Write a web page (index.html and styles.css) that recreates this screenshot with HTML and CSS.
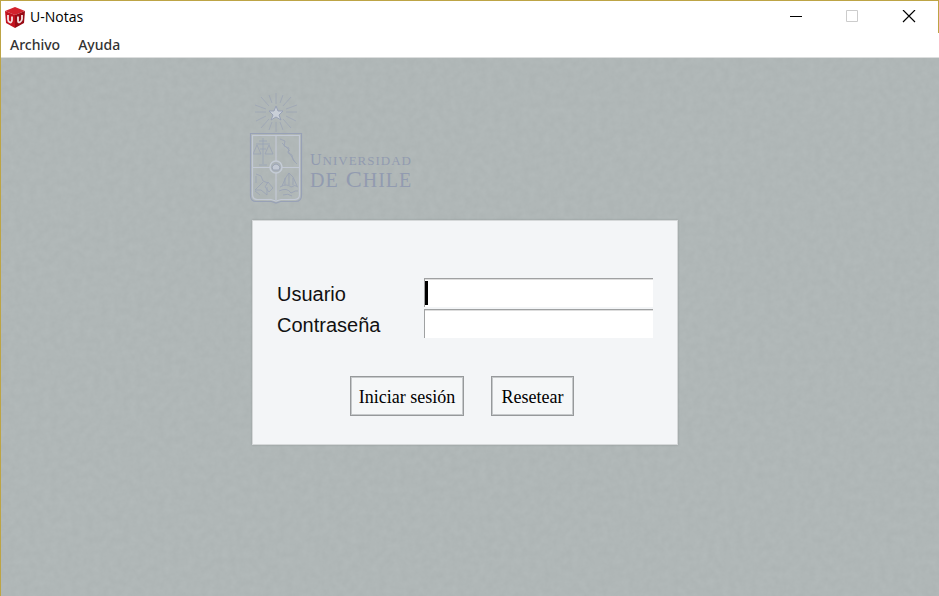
FILE: index.html
```html
<!DOCTYPE html>
<html lang="es">
<head>
<meta charset="utf-8">
<meta name="viewport" content="width=device-width, initial-scale=1">
<title>U-Notas</title>
<link rel="stylesheet" href="styles.css">
</head>
<body>
<div class="window">
  <header class="chrome">
    <div class="titlebar">
      <svg class="app-icon" viewBox="0 0 20 21" aria-hidden="true">
        <path fill="#d3222c" d="M0 4 10 0l10 4-10 4z"/>
        <path fill="#c2121e" d="M0 4l10 4v13L1 16z"/>
        <path fill="#980a14" d="M20 4 10 8v13l9-5z"/>
        <path fill="none" stroke="#f6e4e4" stroke-width="1.800" d="M3 8v4.500q0 2 1.800 2.800T7 13.200V9.500M13 9.500v4.500q0 2 1.900 1.200T17 12V8"/>
      </svg>
      <span class="title">U-Notas</span>
      <div class="controls">
        <button type="button" class="control" aria-label="Minimizar">
          <svg viewBox="0 0 14 14" shape-rendering="crispEdges"><path d="M0 6h12v1H0z"/></svg>
        </button>
        <button type="button" class="control" aria-label="Maximizar" disabled>
          <svg viewBox="0 0 14 14"><path fill="none" stroke="#ccc" d="M.5 .5h11v11H.5z"/></svg>
        </button>
        <button type="button" class="control" aria-label="Cerrar">
          <svg viewBox="0 0 14 14"><path fill="none" stroke="#000" stroke-width="1.200" d="M1 0l12 12M13 0 1 12"/></svg>
        </button>
      </div>
    </div>
    <nav class="menu">
      <button type="button">Archivo</button>
      <button type="button">Ayuda</button>
    </nav>
  </header>
  <main class="content">
    <svg class="paper" aria-hidden="true">
      <filter id="grain" x="0" y="0" width="100%" height="100%" color-interpolation-filters="sRGB">
        <feTurbulence type="fractalNoise" baseFrequency="0.14" numOctaves="3" seed="4"/>
        <feColorMatrix values="0.03 0 0 0 0.674  0.03 0 0 0 0.702  0.03 0 0 0 0.702  0 0 0 0 1"/>
      </filter>
      <rect width="100%" height="100%" filter="url(#grain)"/>
    </svg>
    <div class="login">
      <div class="brand">
        <svg class="crest" viewBox="0 0 54 112" aria-hidden="true">
          <g fill="none" stroke="#9aa3b5" stroke-width="1">
            <path d="M27 1v11M27 30v10M6 20h11M37 20h11M12 5l8 9M42 5l-8 9M12 36l8-9M42 36l-8-9M20 3l3 8M34 3l-3 8M6 13l11 4M48 13l-11 4M7 29l10-5M47 29l-10-5M20 38l3-8M34 38l-3-8" opacity=".7"/>
            <path d="M1.500 41.500h51v62q0 6-6 6h-15l-4.500 1.500-4.500-1.500h-15q-6 0-6-6z" stroke="#98a1b6" stroke-width="1.200"/>
            <path d="M14 46v26M7 52h14M8 53l-4 9h8zM20 53l-4 9h8zM10 73h8M10 49h8M11 57h6" opacity=".8"/>
            <path d="M31 47l5 2-1 5 5 2-1 5 4 2 1 5 4 4M33 51l8 8M39 59l7 11" opacity=".8"/>
            <path d="M7 82l5 2 2 5 5 2M7 84v7M14 90l-8 8h6l6 5v-8M19 90l-3 5 4 5 4-4zM11 103l-5-4" opacity=".8"/>
            <path d="M33 94l4-9 3-4 4 4 4 9M40 81v12M36 86v7M44 86v7M31 95q7-4 11 0 4-3 7 0M30 99q8-4 12 2 5-3 7-2M34 103q5-2 9 1" opacity=".9"/>
          </g>
          <g fill="none" stroke="#c3c9d5" stroke-width="1.200">
            <path d="M3.500 43.500h47v59q0 5-5 5H32l-5 1.500-5-1.500H8.500q-5 0-5-5zM27 44v64M4 75.500h46"/>
          </g>
          <circle cx="27" cy="75" r="6" fill="#acb3b8" stroke="#c5ccd6" stroke-width="1.500"/>
          <path d="M23 75q4-6 8 0l-1 3h-6z" fill="#c3c9d4" stroke="#9ca5b5"/>
          <path d="M27 14l2 5h5l-4 4 2 5-5-3-5 3 2-5-4-4h5z" fill="#c9cfd8" stroke="#98a1b6"/>
        </svg>
        <p class="wordmark"><span class="small">U<span class="caps">NIVERSIDAD</span></span><span class="large"><span class="caps">DE</span> C<span class="caps">HILE</span></span></p>
      </div>
      <form class="panel">
        <div class="fields">
          <label for="usuario">Usuario</label>
          <input class="active" id="usuario" type="text" autocomplete="off">
          <label for="clave">Contraseña</label>
          <input id="clave" type="password" autocomplete="off">
        </div>
        <div class="actions">
          <button type="button" class="submit">Iniciar sesión</button>
          <button type="reset" class="reset">Resetear</button>
        </div>
      </form>
    </div>
  </main>
</div>
</body>
</html>
```

FILE: styles.css
```css
* {
  box-sizing: border-box;
}

body {
  margin: 0;
  font-family: "Liberation Sans", sans-serif;
  color: #111;
}

button {
  padding: 0;
  border: 0;
  background: none;
  color: inherit;
}

.window {
  display: flex;
  flex-direction: column;
  min-height: 100vh;
  border-top: 1px solid #bda445;
  border-left: 1px solid #bda445;
}

.chrome {
  background: #fff;
  border-bottom: 1px solid #dcdede;
}

.titlebar {
  display: flex;
  align-items: center;
  height: 32px;
  padding-left: 4px;
  border-right: 1px solid #bda445;
}

.app-icon {
  width: 20px;
  height: 21px;
}

.title {
  margin-left: 5px;
  font: 14px/20px "Open Sans", sans-serif;
  color: #000;
}

.controls {
  display: flex;
  margin-left: auto;
  padding-right: 1px;
}

.control {
  display: flex;
  align-items: center;
  justify-content: center;
  width: 56px;
  height: 30px;
}

.control svg {
  width: 14px;
  height: 14px;
}

.menu {
  display: flex;
  gap: 18px;
  padding-left: 9px;
}

.menu button {
  font: 500 14px/24px "Noto Sans", sans-serif;
  color: #333;
}

.content {
  position: relative;
  flex: 1;
  display: flex;
  justify-content: center;
  align-items: flex-start;
  padding: 34px 10px 0 0;
  background: #b0b7b7;
}

.paper {
  position: absolute;
  inset: 0;
  width: 100%;
  height: 100%;
}

.login {
  position: relative;
  width: 426px;
  max-width: 100%;
}

.brand {
  display: flex;
  align-items: flex-end;
  gap: 7px;
  height: 112px;
  margin: 0 0 16px -3px;
}

.crest {
  width: 54px;
  height: 112px;
}

.wordmark {
  display: flex;
  flex-direction: column;
  margin: 0 0 14px;
  font-family: "Liberation Serif", serif;
  color: #929bb0;
  white-space: nowrap;
}

.small {
  font-size: 16px;
  line-height: 16px;
  letter-spacing: 1px;
}

.small .caps {
  font-size: 13px;
}

.large {
  font-size: 24px;
  line-height: 20px;
  letter-spacing: 1px;
}

.large .caps {
  font-size: 20px;
}

.panel {
  padding: 57px 24px 28px;
  border: 1px solid #d5d8d9;
  background: #f3f5f7;
  box-shadow: 0 0 2px #919899;
}

.fields {
  display: grid;
  grid-template-columns: 147px 1fr;
  row-gap: 2px;
}

.fields label {
  padding-top: 3px;
  font-size: 20px;
  line-height: 26px;
}

.fields input {
  width: 100%;
  min-width: 0;
  height: 29px;
  padding: 0 6px;
  border: 0 solid #9fa1a2;
  border-width: 1px 0 0 1px;
  border-radius: 0;
  background: #fff;
  box-shadow: inset 0 1px #ddd;
  font: 20px "Liberation Sans", sans-serif;
  outline: 0;
}

.fields .active {
  background: linear-gradient(#000, #000) 0 2px / 3px 24px no-repeat #fff;
}

.actions {
  display: flex;
  justify-content: center;
  gap: 27px;
  margin-top: 38px;
  padding-right: 6px;
}

.actions button {
  height: 40px;
  padding-top: 2px;
  border: 1px solid #96999b;
  background: #f5f7f8;
  box-shadow: inset 0 0 0 1px #c6c9cb;
  font: 18px "Liberation Serif", serif;
  color: #000;
}

.submit {
  width: 114px;
}

.reset {
  width: 83px;
}
```
